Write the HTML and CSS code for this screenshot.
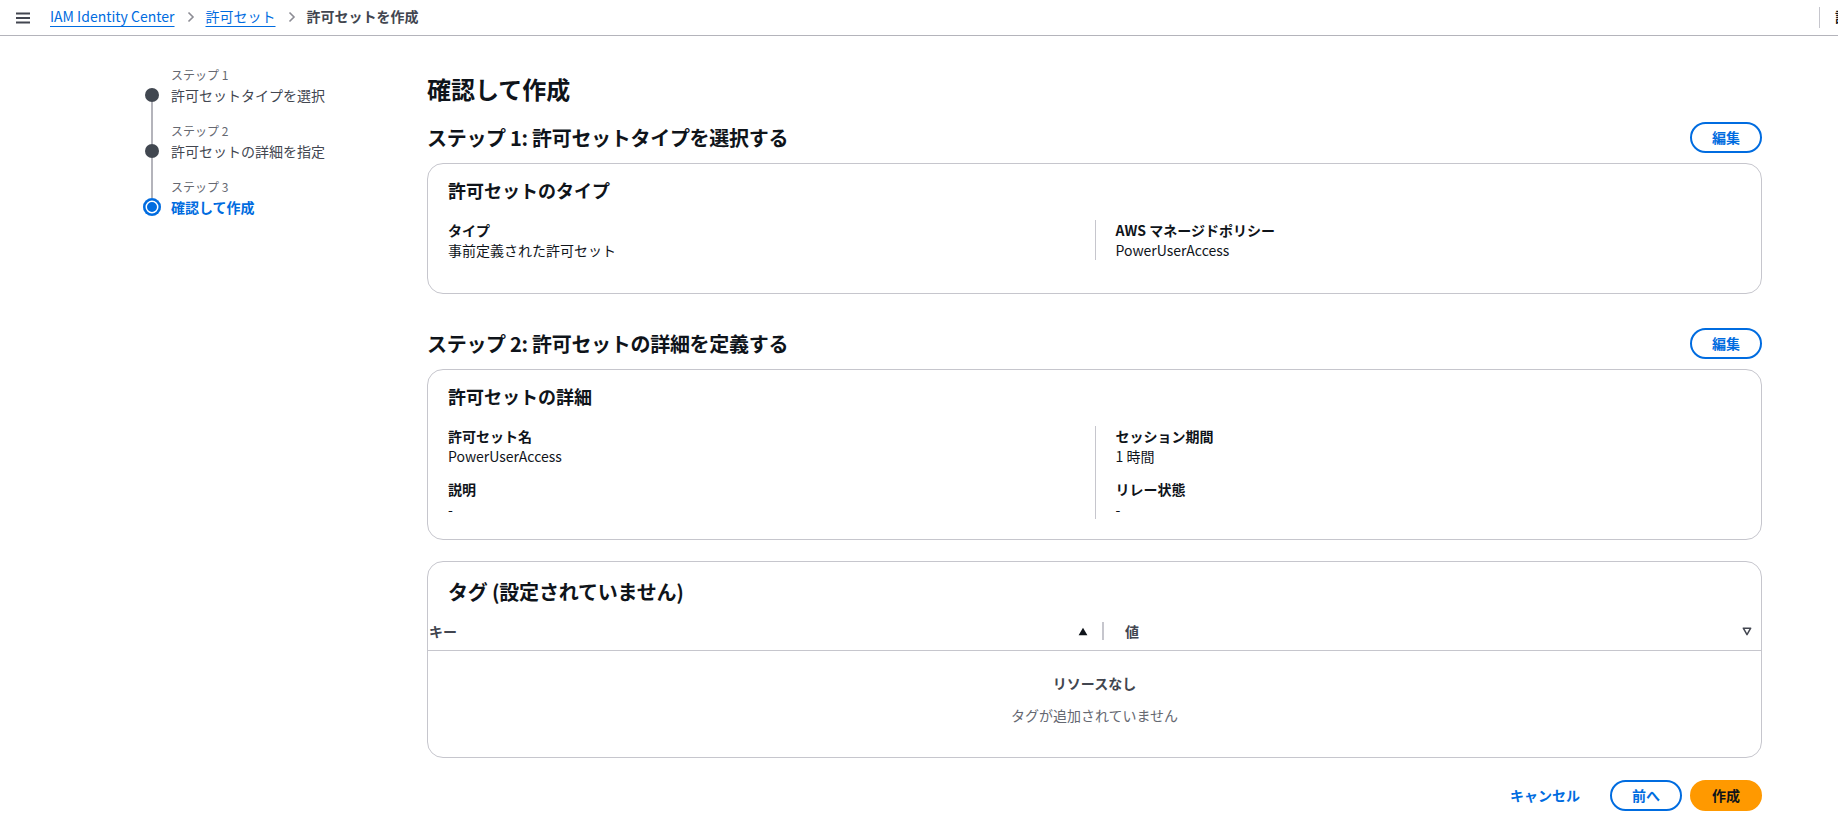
FILE: index.html
```html
<!DOCTYPE html>
<html lang="ja">
<head>
    <meta charset="UTF-8">
    <meta name="viewport" content="width=device-width, initial-scale=1.0">
    <title>許可セットを作成 - IAM Identity Center</title>
    <link rel="stylesheet" href="styles.css">
</head>
<body>
    <header class="topbar">
        <button class="menu-btn" aria-label="メニューを開く">
            <svg width="16" height="12" viewBox="0 0 16 12">
                <path d="M1 1.5h14M1 6h14M1 10.5h14" stroke="#424650" stroke-width="1.8" fill="none"/>
            </svg>
        </button>
        <nav class="breadcrumbs">
            <a href="#">IAM Identity Center</a>
            <svg class="crumb-sep" width="8" height="12" viewBox="0 0 8 12">
                <path d="M1.5 1.5l4.5 4.5-4.5 4.5" stroke="#8c8c94" stroke-width="1.6" fill="none"/>
            </svg>
            <a href="#">許可セット</a>
            <svg class="crumb-sep" width="8" height="12" viewBox="0 0 8 12">
                <path d="M1.5 1.5l4.5 4.5-4.5 4.5" stroke="#8c8c94" stroke-width="1.6" fill="none"/>
            </svg>
            <span class="crumb-current">許可セットを作成</span>
        </nav>
        <div class="topbar-tools">
            <span class="tools-divider"></span>
            <span class="tools-label">設定</span>
        </div>
    </header>

    <div class="page">
        <nav class="steps">
            <ol>
                <li class="step step--done">
                    <div class="step-rail">
                        <span class="rail-line rail-line--top rail-line--hidden"></span>
                        <span class="step-dot"></span>
                        <span class="rail-line rail-line--bottom"></span>
                    </div>
                    <div class="step-text">
                        <div class="step-num">ステップ 1</div>
                        <div class="step-name">許可セットタイプを選択</div>
                    </div>
                </li>
                <li class="step step--done">
                    <div class="step-rail">
                        <span class="rail-line rail-line--top"></span>
                        <span class="step-dot"></span>
                        <span class="rail-line rail-line--bottom"></span>
                    </div>
                    <div class="step-text">
                        <div class="step-num">ステップ 2</div>
                        <div class="step-name">許可セットの詳細を指定</div>
                    </div>
                </li>
                <li class="step step--active">
                    <div class="step-rail">
                        <span class="rail-line rail-line--top"></span>
                        <span class="step-dot"></span>
                    </div>
                    <div class="step-text">
                        <div class="step-num">ステップ 3</div>
                        <div class="step-name">確認して作成</div>
                    </div>
                </li>
            </ol>
        </nav>

        <main class="content">
            <h1>確認して作成</h1>

            <section class="review-section">
                <div class="section-head">
                    <h2>ステップ 1: 許可セットタイプを選択する</h2>
                    <button class="btn">編集</button>
                </div>
                <div class="panel panel--loose">
                    <h3 class="panel-title">許可セットのタイプ</h3>
                    <div class="kv-columns">
                        <div class="kv-col">
                            <div class="kv">
                                <div class="kv-label">タイプ</div>
                                <div class="kv-value">事前定義された許可セット</div>
                            </div>
                        </div>
                        <div class="kv-col kv-col--divided">
                            <div class="kv">
                                <div class="kv-label">AWS マネージドポリシー</div>
                                <div class="kv-value">PowerUserAccess</div>
                            </div>
                        </div>
                    </div>
                </div>
            </section>

            <section class="review-section">
                <div class="section-head">
                    <h2>ステップ 2: 許可セットの詳細を定義する</h2>
                    <button class="btn">編集</button>
                </div>
                <div class="panel">
                    <h3 class="panel-title">許可セットの詳細</h3>
                    <div class="kv-columns">
                        <div class="kv-col">
                            <div class="kv">
                                <div class="kv-label">許可セット名</div>
                                <div class="kv-value">PowerUserAccess</div>
                            </div>
                            <div class="kv">
                                <div class="kv-label">説明</div>
                                <div class="kv-value">-</div>
                            </div>
                        </div>
                        <div class="kv-col kv-col--divided">
                            <div class="kv">
                                <div class="kv-label">セッション期間</div>
                                <div class="kv-value">1 時間</div>
                            </div>
                            <div class="kv">
                                <div class="kv-label">リレー状態</div>
                                <div class="kv-value">-</div>
                            </div>
                        </div>
                    </div>
                </div>
            </section>

            <div class="panel panel--table">
                <h2 class="table-title">タグ (設定されていません)</h2>
                <div class="table-head">
                    <div class="th th--key">
                        <span class="th-label">キー</span>
                        <svg class="sort-icon" width="10" height="9" viewBox="0 0 10 9">
                            <path d="M5 0.8L9.4 8.2H0.6z" fill="#0f141a"/>
                        </svg>
                        <span class="col-resizer"></span>
                    </div>
                    <div class="th th--value">
                        <span class="th-label">値</span>
                        <svg class="sort-icon" width="10" height="9" viewBox="0 0 10 9">
                            <path d="M1.3 1.2h7.4L5 7.6z" stroke="#424650" stroke-width="1.5" fill="none" stroke-linejoin="round"/>
                        </svg>
                    </div>
                </div>
                <div class="empty-state">
                    <div class="empty-title">リソースなし</div>
                    <div class="empty-text">タグが追加されていません</div>
                </div>
            </div>

            <div class="form-actions">
                <button class="btn btn--link">キャンセル</button>
                <button class="btn">前へ</button>
                <button class="btn btn--primary">作成</button>
            </div>
        </main>
    </div>
</body>
</html>
```

FILE: styles.css
```css
body {
    font-family: "Noto Sans CJK JP", "Noto Sans", sans-serif;
    margin: 0;
    padding: 0;
    background: #ffffff;
    color: #0f141a;
    font-size: 14px;
    line-height: 20px;
    overflow: hidden;
}

button {
    font-family: inherit;
}

/* top bar */

.topbar {
    display: flex;
    align-items: center;
    height: 36px;
    border-bottom: 1px solid #b4b4bb;
    box-sizing: border-box;
    padding-left: 15px;
    overflow: hidden;
}

.menu-btn {
    display: flex;
    align-items: center;
    background: none;
    border: none;
    padding: 0;
    margin-right: 19px;
    cursor: pointer;
}

.breadcrumbs {
    display: flex;
    align-items: center;
    flex: 1;
    margin-top: -3px;
}

.breadcrumbs a {
    color: #006ce0;
    text-decoration: underline;
    text-underline-offset: 4px;
    text-decoration-thickness: 1px;
}

.crumb-sep {
    margin: 1px 11px 0 12px;
}

.crumb-current {
    color: #424650;
    font-weight: bold;
}

.topbar-tools {
    display: flex;
    align-items: center;
    width: 19px;
    overflow: hidden;
    flex-shrink: 0;
}

.tools-divider {
    width: 1px;
    height: 24px;
    background: #c6c6cd;
    flex-shrink: 0;
    margin-top: -3px;
}

.tools-label {
    margin-left: 15px;
    font-weight: bold;
    white-space: nowrap;
    color: #0f141a;
    margin-top: -3px;
}

/* layout */

.page {
    display: flex;
    padding: 0 76px 0 142px;
}

.steps {
    width: 285px;
    flex-shrink: 0;
    padding-top: 29px;
}

.steps ol {
    list-style: none;
    margin: 0;
    padding: 0;
}

.step {
    display: flex;
}

.step-rail {
    width: 20px;
    display: flex;
    flex-direction: column;
    align-items: center;
    flex-shrink: 0;
}

.rail-line {
    width: 2px;
    background: #b4b4bb;
}

.rail-line--top {
    height: 23px;
}

.rail-line--hidden {
    background: transparent;
}

.rail-line--bottom {
    flex: 1;
}

.step-dot {
    width: 14px;
    height: 14px;
    border-radius: 50%;
    background: #414750;
    flex-shrink: 0;
}

.step--active .rail-line--top {
    height: 21px;
}

.step--active .step-dot {
    width: 18px;
    height: 18px;
    background: #006ce0;
    box-shadow: inset 0 0 0 2.5px #006ce0, inset 0 0 0 4px #ffffff;
}

.step-text {
    margin-left: 9px;
    padding-bottom: 16px;
}

.step-num {
    font-size: 12px;
    color: #656871;
}

.step-name {
    color: #424650;
}

.step--active .step-name {
    color: #006ce0;
    font-weight: bold;
}

.content {
    flex: 1;
    padding-top: 38px;
}

h1 {
    font-size: 24px;
    line-height: 30px;
    font-weight: bold;
    margin: 0 0 18px 0;
}

/* review sections */

.review-section + .review-section {
    margin-top: 34px;
}

.section-head {
    display: flex;
    align-items: center;
    justify-content: space-between;
    margin-bottom: 10px;
}

.section-head h2 {
    font-size: 20px;
    line-height: 24px;
    letter-spacing: -0.3px;
    margin: 0;
}

.btn {
    font-size: 14px;
    line-height: 19px;
    font-weight: bold;
    padding: 4px 20px;
    border: 2px solid #006ce0;
    border-radius: 20px;
    background: #ffffff;
    color: #006ce0;
    cursor: pointer;
}

.btn--link {
    border-color: transparent;
    background: transparent;
}

.btn--primary {
    background: #ff9900;
    border-color: #ff9900;
    color: #0f141a;
}

.panel {
    border: 1px solid #c6c6cd;
    border-radius: 16px;
    padding: 15px 20px 20px;
}

.panel--loose {
    padding-bottom: 33px;
}

.panel-title {
    font-size: 18px;
    line-height: 22px;
    margin: 0 0 19px 0;
}

.kv-columns {
    display: grid;
    grid-template-columns: 1fr 1fr;
}

.kv-col {
    display: flex;
    flex-direction: column;
    gap: 13px;
}

.kv-col--divided {
    border-left: 1px solid #c6c6cd;
    padding-left: 20px;
}

.kv-label {
    font-weight: bold;
}

/* tags table */

.panel--table {
    margin-top: 21px;
    padding: 18px 0 32px;
}

.table-title {
    font-size: 20px;
    line-height: 24px;
    letter-spacing: -0.2px;
    margin: 0 0 9px 20px;
}

.table-head {
    display: grid;
    grid-template-columns: 676px 1fr;
    border-bottom: 1px solid #c6c6cd;
    padding: 8px 0 9px;
}

.th {
    display: flex;
    align-items: center;
    font-weight: bold;
    color: #424650;
}

.th-label {
    flex: 1;
}

.th--key {
    padding-left: 1px;
}

.th--key .sort-icon {
    margin-right: 14px;
}

.col-resizer {
    width: 2px;
    height: 18px;
    background: #c6c6cd;
}

.th--value {
    padding: 0 9px 0 21px;
}

.empty-state {
    text-align: center;
    padding-top: 22px;
}

.empty-title {
    font-weight: bold;
    color: #424650;
}

.empty-text {
    color: #656871;
    margin-top: 12px;
}

.form-actions {
    display: flex;
    justify-content: flex-end;
    gap: 8px;
    margin-top: 22px;
}
```
